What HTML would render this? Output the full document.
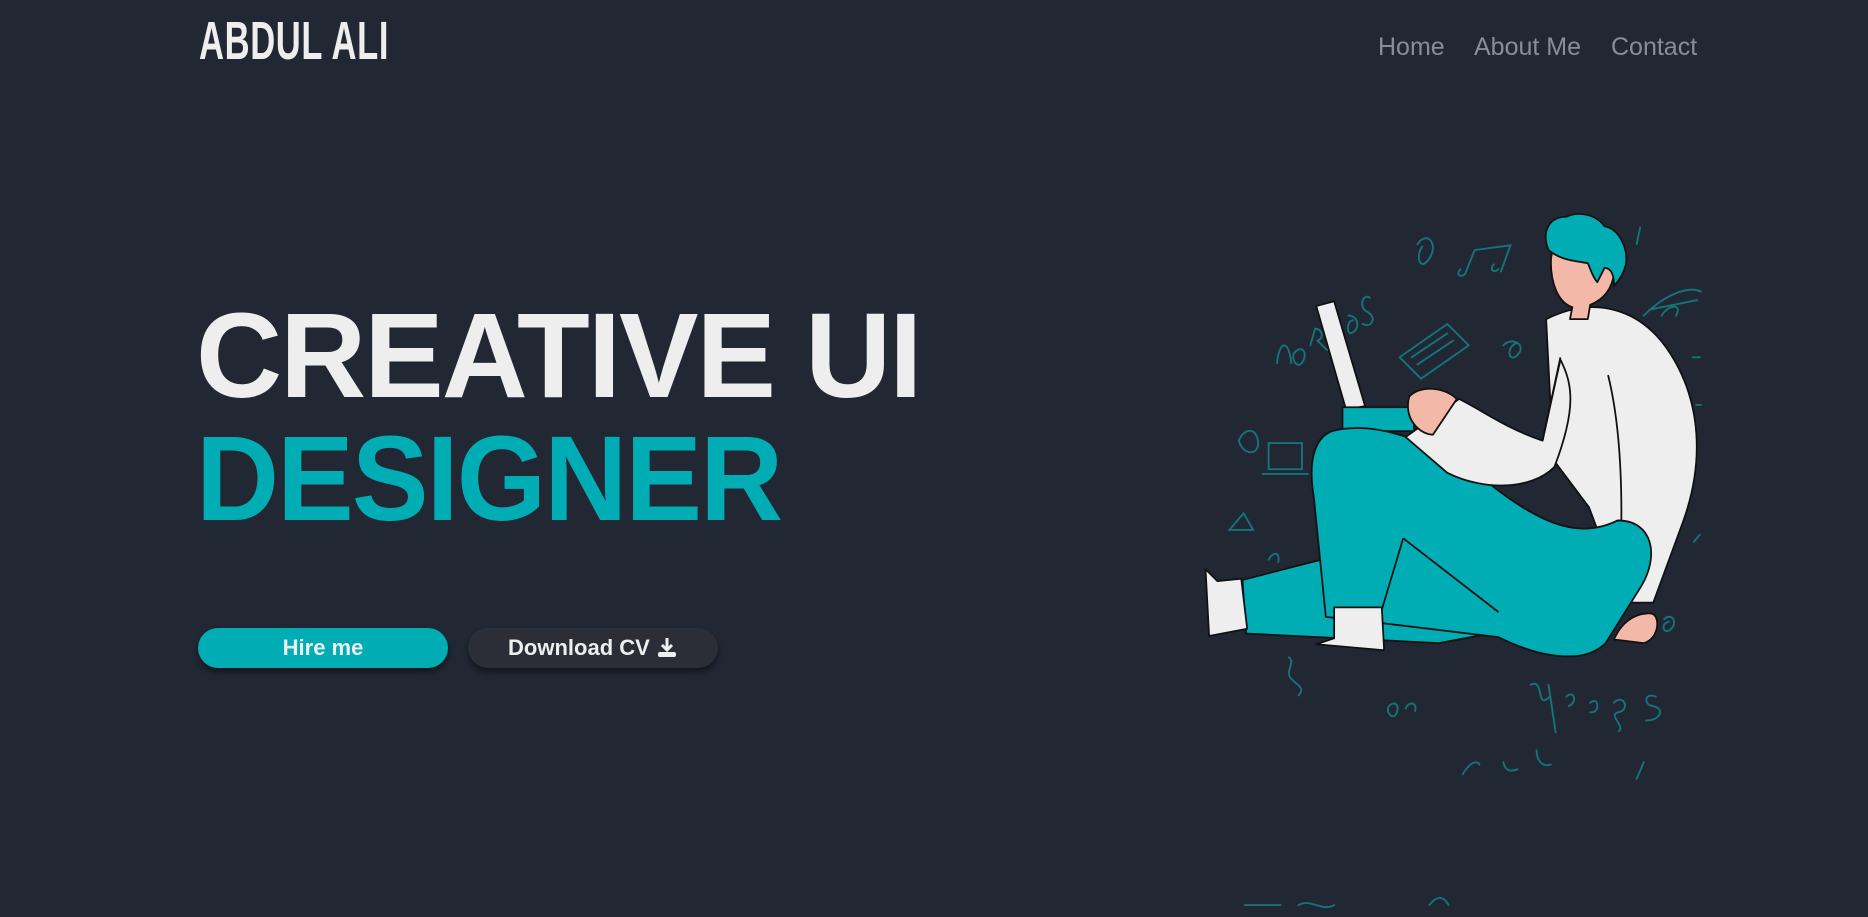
<!DOCTYPE html>
<html><head><meta charset="utf-8"><style>
html,body{margin:0;padding:0;width:1868px;height:917px;overflow:hidden;background:#212733;font-family:"Liberation Sans",sans-serif}
.abs{position:absolute;white-space:nowrap}
.logo{left:199px;top:10px;font-family:"Liberation Sans Narrow","Liberation Sans",sans-serif;font-weight:bold;font-size:54px;color:#eeeeee;letter-spacing:1px;transform:scaleX(0.64);transform-origin:left}
.nav{top:33px;font-size:25px;color:#8a8d94}
.h1{left:196px;font-weight:bold;font-size:121px;letter-spacing:-2px;color:#eeeeee;transform-origin:left}
.btn{top:628px;height:40px;width:250px;border-radius:20px;color:#eee;font-weight:bold;font-size:22px;text-align:center;line-height:40px;box-shadow:0 4px 6px rgba(0,0,0,.45)}
</style></head><body>
<div class="abs logo">ABDUL ALI</div>
<div class="abs nav" style="left:1378px">Home</div>
<div class="abs nav" style="left:1474px">About Me</div>
<div class="abs nav" style="left:1611px">Contact</div>
<div class="abs h1" style="top:285px;transform:scaleX(0.985)">CREATIVE UI</div>
<div class="abs h1" style="top:408px;color:#00adb5;transform:scaleX(0.95)">DESIGNER</div>
<div class="abs btn" style="left:198px;background:#00adb5">Hire me</div>
<div class="abs btn" style="left:468px;background:#2b2e37">Download CV <svg width="22" height="22" viewBox="0 0 22 22" style="vertical-align:-3px"><path d="M11 2v11M6 9l5 5 5-5" stroke="#eee" stroke-width="3" fill="none"/><rect x="2" y="16" width="18" height="5" rx="2" fill="#eee"/></svg></div>

<svg class="abs" style="left:0;top:0" width="1868" height="917" viewBox="0 0 1568 770">
<g stroke="#16737a" stroke-width="1.6" fill="none" stroke-linecap="round">
<path d="M1072 305c2-20 10-20 12 0M1086 297c6-8 12-2 8 6s-10 0-8-6M1100 290l4-14c6 0 8 8 2 10l8 8M1115 280c8-8 12 0 6 8M1132 265c8 0 10 10 4 14s-6-10 0-10M1150 250c-6-4-10 8-2 12s4 14-4 10"/>
<path d="M1230 230l8-20l30-4l-8 22M1230 230c-4 4-8 0-4-4M1258 226c-4 4-8 0-4-4"/>
<path d="M1190 205c8-12 18 0 10 12s-12-2-6-10"/>
<path d="M1175 300l40-28l18 18l-40 28zM1185 300l30-20M1190 306l30-20"/>
<path d="M1262 290c8-8 20 0 12 8s-10-8 0-10"/>
<path d="M1380 265c20-20 40-25 48-20M1385 260l40-8M1395 265c6-10 18-10 12 0"/>
<path d="M1040 370c4-10 14-12 16 0s-12 14-16 0M1065 372h28v22h-28zM1060 398h38"/>
<path d="M1032 445l12-14l8 14zM1065 470c4-8 10-6 8 2"/>
<path d="M1082 552c6 4-4 12 2 18s12 8 6 14"/>
<path d="M1165 595c2-6 10-6 8 2s-8 4-8-2M1180 595c2-6 10-6 8 2"/>
<path d="M1285 575c12-6 4 22 16 10M1300 575l6 40M1315 585c6-6 10 4 2 8M1335 590c8-6 8 10 0 8M1355 590c8-8 14 6 4 8s6 12 0 16M1390 585c-8-4-12 6-2 8s6 12-6 12"/>
<path d="M1228 650c6-10 12-12 14-8M1262 640c2 8 6 8 12 6M1290 630c0 10 6 14 12 12M1380 640l-6 14"/>
<path d="M1397 520c6-6 12 2 6 8s-10-4-2-6"/>
<path d="M1045 760h30M1090 760c10-6 20 6 30 0M1200 760c6-8 12-8 16 0"/>
<path d="M1421 300h6M1424 340h4M1422 455l5-6M1374 205l3-14"/>
</g>
<g stroke="#111" stroke-width="1.5" stroke-linejoin="round">
<path d="M1043 487l70-18l55 50l120 6l-80 15l-162 -8z" fill="#00adb5"/>
<path d="M1012 478l10 10l20-2l5 42l-32 6z" fill="#eeeeee"/>
<path d="M1298 268c40-20 80-10 105 30c25 40 28 90 10 140l-25 68h-24l-30-80l-30-40z" fill="#eeeeee"/>
<path d="M1350 315c10 40 15 100 8 200" fill="none"/>
<path d="M1105 257l15-4l26 88l-16 3z" fill="#eeeeee"/>
<rect x="1127" y="342" width="60" height="20" fill="#00adb5"/>
<path d="M1118 362c40-10 90 10 140 50c40 30 70 40 100 25c30 0 35 30 20 55l-30 48c-20 20-60 10-90-5l-100-12l-45-5l-10-100c-5-30 0-50 15-56z" fill="#00adb5"/>
<path d="M1178 452l80 62" fill="none"/>
<path d="M1178 452l-18 60" fill="none"/>
<path d="M1225 335c20 10 40 25 70 35l15-68c10 20 14 40 -5 90c-20 20-60 20-90 5l-35-30z" fill="#eeeeee"/>
<path d="M1310 300l-15 70" fill="none"/>
<path d="M1183 333c10-10 30-8 40 2l-20 30c-10 0-25-12-20-32z" fill="#f4b8a8"/>
<path d="M1385 515c10 0 8 22-5 25l-25-3c5-12 15-22 30-22z" fill="#f4b8a8"/>
<path d="M1120 510h40l2 36l-57-5l15-5z" fill="#eeeeee"/>
<path d="M1302 220c0-15 10-22 25-20c20 2 30 12 28 30c-2 14-10 22-20 26l-2 12h-15l2-10c-12-4-18-20-18-38z" fill="#f4b8a8"/>
<path d="M1300 210c-6-15 0-28 15-28c10-5 25-2 32 8c12 2 20 18 18 32c-2 8-6 14-10 18c0-8-2-15-8-15l-6 12c-4-4-6-12-8-16c-10-2-22-2-33-11z" fill="#00adb5"/>
</g>
</svg>
</body></html>
